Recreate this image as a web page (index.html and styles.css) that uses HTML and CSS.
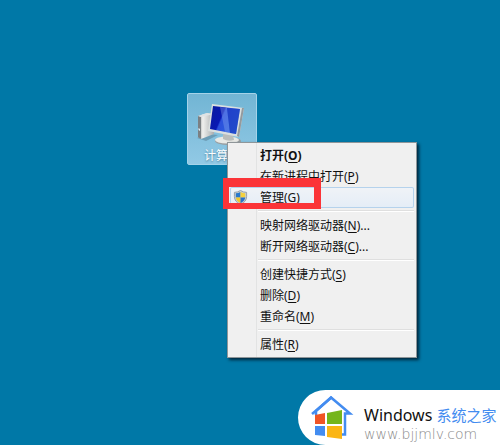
FILE: index.html
```html
<!DOCTYPE html>
<html lang="zh-CN">
<head>
<meta charset="utf-8">
<meta name="viewport" content="width=device-width, initial-scale=1">
<title>计算机</title>
<link rel="stylesheet" href="styles.css">
</head>
<body>
<main class="desktop">
  <button class="shortcut" type="button">
    <svg class="shortcut-icon" viewBox="2 0 52 44" aria-hidden="true">
      <defs>
        <linearGradient id="screen" x1="0" y1="0" x2="1" y2="0.4">
          <stop offset="0" stop-color="#0a1c9c"/><stop offset="0.45" stop-color="#0818b4"/><stop offset="0.5" stop-color="#2b50dc"/><stop offset="1" stop-color="#2a62e0"/>
        </linearGradient>
        <linearGradient id="tower" x1="0" y1="0" x2="1" y2="0">
          <stop offset="0" stop-color="#8b8f90"/><stop offset="0.3" stop-color="#f0f0ee"/><stop offset="1" stop-color="#a9adae"/>
        </linearGradient>
      </defs>
      <path d="M3 35 14 31 24 32 12 38Z" fill="#507084" opacity=".45"/>
      <path d="M4 13 13 10 20 11 20 31 7 36 4 34Z" fill="url(#tower)"/>
      <path d="M4 13 7 14 7 36 4 34Z" fill="#7b8083"/>
      <path d="M4 13 13 10 20 11 7 14Z" fill="#dfe3e4"/>
      <path d="M4.500 25 6 26 6 28 4.500 27Z" fill="#dceef7"/>
      <ellipse cx="34" cy="38" rx="13" ry="4" fill="#9a9fa1"/>
      <ellipse cx="33" cy="37" rx="12" ry="3.500" fill="#e8e9e5"/>
      <path d="M29 30 39 32 40 37Q34 39 29 36Z" fill="#babdbb"/>
      <path d="M18 1 50 5 45 34 14 28Z" fill="#dadfdf"/>
      <path d="M50 5 45 34 43 33 48 5Z" fill="#939a9e"/>
      <path d="M19 3 46 6 42 31 16 26Z" fill="url(#screen)"/>
      <path d="M26 4 33 5 36 30 31 29Z" fill="#92aef0" opacity=".35"/>
      <path d="M33 5 46 6 42 31 36 30Z" fill="#172fb6" opacity=".5"/>
    </svg>
    <span class="shortcut-name">计算机</span>
  </button>

  <nav class="menu" aria-label="快捷菜单">
    <button class="item default" type="button">打开(<u>O</u>)</button>
    <button class="item" type="button">在新进程中打开(<u>P</u>)</button>
    <button class="item active" type="button">
      <svg class="shield" viewBox="0 0 16 16" aria-hidden="true">
        <path d="M8 .5Q11 2.500 14.500 2.500V7Q14.500 12.500 8 15.500 1.500 12.500 1.500 7V2.500Q5 2.500 8 .5Z" fill="#c9cfd2" stroke="#929da5"/>
        <path d="M8 2Q5.500 3.500 3 3.500V8H8Z" fill="#2878cc"/>
        <path d="M8 2Q10.500 3.500 13 3.500V8H8Z" fill="#f5d13c"/>
        <path d="M3 8H8V14Q3.500 12 3 8Z" fill="#f0c82d"/>
        <path d="M13 8H8V14Q12.500 12 13 8Z" fill="#2b72c7"/>
      </svg>
      管理(<u>G</u>)
    </button>
    <hr class="separator">
    <button class="item" type="button">映射网络驱动器(<u>N</u>)...</button>
    <button class="item" type="button">断开网络驱动器(<u>C</u>)...</button>
    <hr class="separator">
    <button class="item" type="button">创建快捷方式(<u>S</u>)</button>
    <button class="item" type="button">删除(<u>D</u>)</button>
    <button class="item" type="button">重命名(<u>M</u>)</button>
    <hr class="separator">
    <button class="item" type="button">属性(<u>R</u>)</button>
    <div class="marker" aria-hidden="true"></div>
  </nav>

  <footer class="brand">
    <svg class="brand-logo" viewBox="0 0 44 46" aria-hidden="true">
      <path d="M6 20V16M6 16 21 2.500 40 18.500H35V39.500H30" fill="none" stroke="#438cf0" stroke-width="2.500"/>
      <path d="M2 19 22 2" stroke="#438cf0" stroke-width="2.500"/>
      <path d="M5 20 15 18V29H5Z" fill="#f15425"/>
      <path d="M17 18 32 15V29H17Z" fill="#75b51c"/>
      <path d="M5 31H15V41L5 40Z" fill="#438cf0"/>
      <path d="M17 31H32V44L17 42Z" fill="#fbb514"/>
    </svg>
    <div class="brand-text">
      <div class="brand-name">Windows <span class="brand-cn">系统之家</span></div>
      <div class="brand-url">www.bjjmlv.com</div>
    </div>
  </footer>
</main>
</body>
</html>
```
FILE: styles.css
```css
* { box-sizing: border-box; }

body {
  margin: 0;
  background: #0078a7;
  font-family: "Noto Sans", "Noto Sans CJK SC", sans-serif;
}

.desktop {
  position: relative;
  min-height: 100vh;
  overflow: hidden;
}

.shortcut {
  position: absolute;
  left: 187px;
  top: 93px;
  display: flex;
  flex-direction: column;
  align-items: center;
  width: 70px;
  height: 72px;
  padding: 9px 0 0;
  border: 1px solid #a4d3e9;
  border-radius: 2px;
  background: linear-gradient(#72b5d4, #91c9e5);
  font: 12px/16px "Noto Sans CJK SC", sans-serif;
  color: #fff;
}

.shortcut-icon { width: 52px; height: 44px; }

.shortcut-name { text-shadow: 0 1px 2px #467b98; }

.menu {
  position: absolute;
  left: 227px;
  top: 142px;
  width: 190px;
  padding: 2px;
  border: 1px solid #8f9699;
  background: linear-gradient(90deg, #f0f0f0 28px, #e2e3e3 28px, #e2e3e3 29px, #f0f0f0 29px);
  box-shadow: 2px 2px 3px #00263b;
}

.item {
  position: relative;
  display: flex;
  align-items: center;
  width: 100%;
  height: 21px;
  padding: 0 0 0 30px;
  border: 0;
  background: none;
  font: 12px/20px "Noto Sans", "Noto Sans CJK SC", sans-serif;
  color: #111;
  white-space: nowrap;
}

.item u { text-underline-offset: 2px; }

.default { font-weight: 700; }

.active {
  border-radius: 2px;
  background: linear-gradient(#f0f3f7, #e4edf7);
  box-shadow: inset 0 0 0 1px #b5d2ec;
}

.shield {
  position: absolute;
  left: 3px;
  top: 3px;
  width: 15px;
  height: 15px;
}

.separator {
  height: 2px;
  margin: 2px 0 3px 28px;
  border: 0;
  border-top: 1px solid #dfdfdf;
  border-bottom: 1px solid #fff;
}

.marker {
  position: absolute;
  left: -5px;
  top: 35px;
  width: 98px;
  height: 31px;
  border: solid #fb3438;
  border-width: 9px 7px 6px 6px;
  pointer-events: none;
}

.brand {
  position: absolute;
  right: 0;
  bottom: 0;
  display: flex;
  gap: 10px;
  width: 202px;
  height: 55px;
  padding: 5px 0 0 12px;
  border-radius: 28px 0 0 28px;
  background: #fff;
}

.brand-logo { flex: none; width: 44px; height: 46px; }

.brand-text { padding-top: 10px; white-space: nowrap; }

.brand-name { font-size: 16px; line-height: 20px; color: #111; }

.brand-cn { font-size: 15px; color: #438cf0; }

.brand-url {
  font: 200 14px/18px "DejaVu Sans", sans-serif;
  color: #888;
}
```
